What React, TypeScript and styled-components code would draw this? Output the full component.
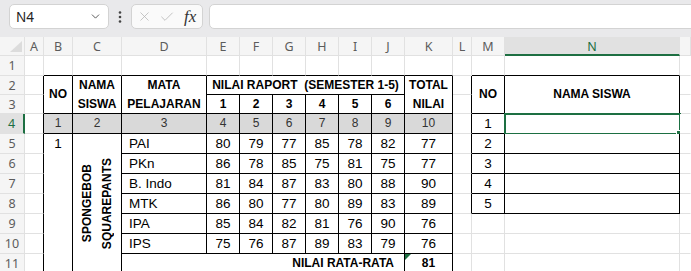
import React from 'react'
import styled, { createGlobalStyle } from 'styled-components'
import { ChevronDown, X, Check } from 'lucide-react'

const COLORS = {
  chrome: '#e9e9eb',
  box: '#d3d3d3',
  header: '#f5f5f5',
  headerSel: '#e1e1e1',
  headText: '#5c5c5c',
  grid: '#e1e1e1',
  line: '#000000',
  green: '#1d6f42',
  band: '#d9d9d9',
  text: '#000000',
}

const CELL_FONT = `'Liberation Sans', Arial, sans-serif`
const UI_FONT = `'Noto Sans', 'Open Sans', 'Liberation Sans', sans-serif`

const LETTERS = ['A', 'B', 'C', 'D', 'E', 'F', 'G', 'H', 'I', 'J', 'K', 'L', 'M', 'N', 'O']
const ROW_COUNT = 11
const SEL = { r: 4, c: 13 }

type Edge = 'grid' | 'line' | 'none'
type Kind = 'plain' | 'head' | 'band' | 'subject' | 'vertical'

interface CellDef {
  r: number
  c: number
  rs?: number
  cs?: number
  text?: string
  kind?: Kind
  align?: 'left' | 'center' | 'right'
  top?: boolean
  flag?: boolean
}

const SCORES: [string, number[], number][] = [
  ['PAI', [80, 79, 77, 85, 78, 82], 77],
  ['PKn', [86, 78, 85, 75, 81, 75], 77],
  ['B. Indo', [81, 84, 87, 83, 80, 88], 90],
  ['MTK', [86, 80, 77, 80, 89, 83], 89],
  ['IPA', [85, 84, 82, 81, 76, 90], 76],
  ['IPS', [75, 76, 87, 89, 83, 79], 76],
]

const inTable = (r: number, c: number) =>
  (r >= 2 && r <= 11 && c >= 1 && c <= 10) || (r >= 2 && r <= 8 && c >= 12 && c <= 13)

const buildCells = (): CellDef[] => {
  const defs: CellDef[] = [
    { r: 2, c: 1, rs: 2, text: 'NO', kind: 'head' },
    { r: 2, c: 2, rs: 2, text: 'NAMA\nSISWA', kind: 'head' },
    { r: 2, c: 3, rs: 2, text: 'MATA\nPELAJARAN', kind: 'head' },
    { r: 2, c: 4, cs: 6, text: 'NILAI RAPORT  (SEMESTER 1-5)', kind: 'head' },
    { r: 2, c: 10, rs: 2, text: 'TOTAL\nNILAI', kind: 'head' },
    { r: 5, c: 1, rs: 7, text: '1', top: true },
    { r: 5, c: 2, rs: 7, text: 'SPONGEBOB\nSQUAREPANTS', kind: 'vertical' },
    { r: 11, c: 3, cs: 7, text: 'NILAI RATA-RATA', kind: 'head', align: 'right' },
    { r: 11, c: 10, text: '81', kind: 'head', flag: true },
    { r: 2, c: 12, rs: 2, text: 'NO', kind: 'head' },
    { r: 2, c: 13, rs: 2, text: 'NAMA SISWA', kind: 'head' },
  ]
  for (let i = 0; i < 6; i++) defs.push({ r: 3, c: 4 + i, text: String(i + 1), kind: 'head' })
  for (let i = 0; i < 10; i++) defs.push({ r: 4, c: 1 + i, text: String(i + 1), kind: 'band' })
  SCORES.forEach(([subject, values, total], i) => {
    const r = 5 + i
    defs.push({ r, c: 3, text: subject, kind: 'subject' })
    values.forEach((v, j) => defs.push({ r, c: 4 + j, text: String(v) }))
    defs.push({ r, c: 10, text: String(total) })
  })
  for (let i = 0; i < 5; i++) defs.push({ r: 4 + i, c: 12, text: String(i + 1) })

  const byKey = new Map<string, CellDef>()
  const covered = new Set<string>()
  defs.forEach(d => {
    byKey.set(`${d.r},${d.c}`, d)
    for (let y = 0; y < (d.rs ?? 1); y++)
      for (let x = 0; x < (d.cs ?? 1); x++)
        if (x || y) covered.add(`${d.r + y},${d.c + x}`)
  })

  const out: CellDef[] = []
  for (let r = 1; r <= ROW_COUNT; r++)
    for (let c = 0; c < LETTERS.length; c++) {
      const key = `${r},${c}`
      if (covered.has(key)) continue
      out.push(byKey.get(key) ?? { r, c })
    }
  return out
}

const GlobalStyle = createGlobalStyle`
  html, body { margin: 0; padding: 0; background: #fff; }
  body { font-family: ${UI_FONT}; }
`

const Window = styled.div`
  width: 691px;
  height: 271px;
  overflow: hidden;
  background: ${COLORS.chrome};
`

const Toolbar = styled.div`
  height: 37px;
  box-sizing: border-box;
  padding: 4px 0 0 9px;
  display: flex;
  align-items: flex-start;
`

const NameBox = styled.div`
  width: 100px;
  height: 25px;
  box-sizing: border-box;
  border: 1px solid ${COLORS.box};
  border-radius: 5px;
  background: #fff;
  display: flex;
  align-items: center;
  justify-content: space-between;
  padding: 0 6px 0 6px;
  font-size: 13.5px;
  color: #222;
`

const Dots = styled.div`
  width: 22px;
  height: 25px;
  display: flex;
  align-items: center;
  justify-content: center;
`

const FormulaTools = styled.div`
  width: 72px;
  height: 25px;
  box-sizing: border-box;
  border: 1px solid ${COLORS.box};
  border-radius: 5px;
  background: #fafafa;
  display: flex;
  align-items: center;
  padding-left: 5px;
  gap: 7px;
  color: #b4b4b4;
`

const Fx = styled.span`
  font-family: 'Liberation Serif', serif;
  font-style: italic;
  font-size: 17px;
  color: #333;
  margin-left: 2px;
`

const FormulaInput = styled.div`
  flex: 1;
  height: 25px;
  margin: 0 -10px 0 6px;
  box-sizing: border-box;
  border: 1px solid ${COLORS.box};
  border-radius: 5px;
  background: #fff;
`

const Sheet = styled.div`
  display: grid;
  grid-template-columns: 25px 19px 29px 49px 85px repeat(6, 33px) 48px 19px 33px 175px 1fr;
  grid-template-rows: 19px 20px 19px 19px 20px repeat(6, 20px) 20px;
  background: #fff;
  overflow: hidden;
  height: 234px;
`

const Corner = styled.div`
  grid-column: 1;
  grid-row: 1;
  background: ${COLORS.header};
  border-right: 1px solid ${COLORS.grid};
  border-bottom: 1px solid ${COLORS.grid};
  box-sizing: border-box;
  display: flex;
  align-items: flex-end;
  justify-content: flex-end;
  padding: 0 2px 3px 0;

  &::after {
    content: '';
    width: 12px;
    height: 11px;
    background: #dcdcdc;
    clip-path: polygon(100% 0, 100% 100%, 0 100%);
  }
`

const ColHead = styled.div<{ $active?: boolean }>`
  grid-row: 1;
  box-sizing: border-box;
  background: ${p => (p.$active ? COLORS.headerSel : COLORS.header)};
  border-right: 1px solid ${COLORS.grid};
  border-bottom: ${p => (p.$active ? `2px solid ${COLORS.green}` : `1px solid ${COLORS.grid}`)};
  color: ${p => (p.$active ? COLORS.green : COLORS.headText)};
  font-size: 12.5px;
  display: flex;
  align-items: center;
  justify-content: center;
  padding-top: ${p => (p.$active ? '1px' : '0')};
`

const RowHead = styled.div<{ $active?: boolean }>`
  grid-column: 1;
  box-sizing: border-box;
  background: ${p => (p.$active ? COLORS.headerSel : COLORS.header)};
  border-bottom: 1px solid ${COLORS.grid};
  border-right: ${p => (p.$active ? `2px solid ${COLORS.green}` : `1px solid ${COLORS.grid}`)};
  color: ${p => (p.$active ? COLORS.green : COLORS.headText)};
  font-size: 12.5px;
  display: flex;
  align-items: center;
  justify-content: center;
`

const edgeColor = (e: Edge) => (e === 'line' ? COLORS.line : e === 'grid' ? COLORS.grid : 'transparent')

const Cell = styled.div<{
  $col: number
  $row: number
  $cs: number
  $rs: number
  $right: Edge
  $bottom: Edge
  $kind: Kind
  $align: 'left' | 'center' | 'right'
  $top?: boolean
  $flag?: boolean
}>`
  grid-column: ${p => p.$col} / span ${p => p.$cs};
  grid-row: ${p => p.$row} / span ${p => p.$rs};
  position: relative;
  box-sizing: border-box;
  border-right: 1px solid ${p => edgeColor(p.$right)};
  border-bottom: 1px solid ${p => edgeColor(p.$bottom)};
  background: ${p => (p.$kind === 'band' ? COLORS.band : '#fff')};
  display: flex;
  align-items: ${p => (p.$top ? 'flex-start' : 'center')};
  justify-content: ${p => (p.$align === 'left' ? 'flex-start' : p.$align === 'right' ? 'flex-end' : 'center')};
  text-align: center;
  padding: ${p => (p.$kind === 'subject' ? '0 0 0 7px' : p.$align === 'right' ? '0 10px 0 0' : '0')};
  font-family: ${CELL_FONT};
  font-size: ${p => (p.$kind === 'band' ? '12px' : p.$kind === 'head' || p.$kind === 'vertical' ? '12px' : '13.5px')};
  font-weight: ${p => (p.$kind === 'head' || p.$kind === 'vertical' ? 700 : 400)};
  color: ${p => (p.$kind === 'band' ? '#333' : COLORS.text)};
  line-height: 19px;
  white-space: pre;

  ${p =>
    p.$flag &&
    `
    &::before {
      content: '';
      position: absolute;
      top: 0;
      left: 0;
      border-top: 6px solid ${COLORS.green};
      border-right: 6px solid transparent;
    }
  `}
`

const Vertical = styled.span`
  writing-mode: vertical-rl;
  transform: rotate(180deg);
  line-height: 20px;
  text-align: center;
`

const Selection = styled.div`
  position: absolute;
  top: -1px;
  left: -1px;
  right: -2px;
  bottom: -2px;
  border: 2px solid ${COLORS.green};
  pointer-events: none;
`

const Handle = styled.div`
  position: absolute;
  right: -5px;
  bottom: -5px;
  width: 6px;
  height: 6px;
  background: ${COLORS.green};
  border: 1px solid #fff;
`

const CELLS = buildCells()

const App = () => {
  return (
    <Window>
      <GlobalStyle />
      <Toolbar>
        <NameBox>
          <span>N4</span>
          <ChevronDown size={13} strokeWidth={1.6} color="#444" />
        </NameBox>
        <Dots>
          <svg width="4" height="12" viewBox="0 0 4 12">
            <circle cx="2" cy="1.5" r="1.3" fill="#444" />
            <circle cx="2" cy="6" r="1.3" fill="#444" />
            <circle cx="2" cy="10.5" r="1.3" fill="#444" />
          </svg>
        </Dots>
        <FormulaTools>
          <X size={15} strokeWidth={1.2} />
          <Check size={16} strokeWidth={1.2} />
          <Fx>fx</Fx>
        </FormulaTools>
        <FormulaInput />
      </Toolbar>

      <Sheet>
        <Corner />
        {LETTERS.map((l, i) => (
          <ColHead key={l} $active={i === SEL.c} style={{ gridColumn: i + 2 }}>
            {i < LETTERS.length - 1 ? l : ''}
          </ColHead>
        ))}
        {Array.from({ length: ROW_COUNT }, (_, i) => (
          <RowHead key={i} $active={i + 1 === SEL.r} style={{ gridRow: i + 2 }}>
            {i + 1}
          </RowHead>
        ))}
        {CELLS.map(d => {
          const cs = d.cs ?? 1
          const rs = d.rs ?? 1
          const own = inTable(d.r, d.c)
          const last = d.c + cs - 1 === LETTERS.length - 1
          const right: Edge = own || inTable(d.r, d.c + cs) ? 'line' : last ? 'none' : 'grid'
          const bottom: Edge = own || inTable(d.r + rs, d.c) ? 'line' : 'grid'
          const kind = d.kind ?? 'plain'
          const selected = d.r === SEL.r && d.c === SEL.c
          return (
            <Cell
              key={`${d.r}-${d.c}`}
              $col={d.c + 2}
              $row={d.r + 1}
              $cs={cs}
              $rs={rs}
              $right={right}
              $bottom={bottom}
              $kind={kind}
              $align={d.align ?? (kind === 'subject' ? 'left' : 'center')}
              $top={d.top}
              $flag={d.flag}
            >
              {kind === 'vertical' ? <Vertical>{d.text}</Vertical> : d.text}
              {selected && (
                <Selection>
                  <Handle />
                </Selection>
              )}
            </Cell>
          )
        })}
      </Sheet>
    </Window>
  )
}

export default App
